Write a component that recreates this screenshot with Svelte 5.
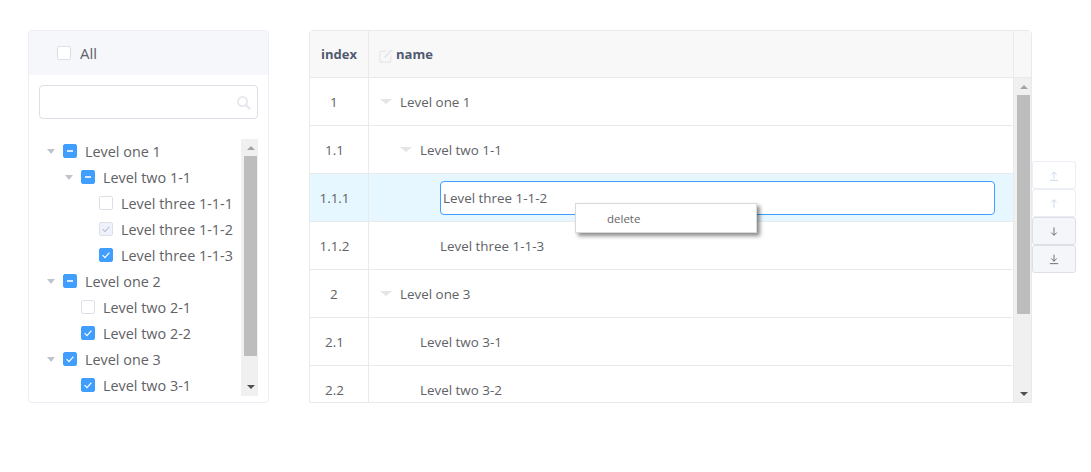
<script>
  const tree = [
    { label: 'Level one 1', level: 0, arrow: true, check: 'half' },
    { label: 'Level two 1-1', level: 1, arrow: true, check: 'half' },
    { label: 'Level three 1-1-1', level: 2, check: 'none' },
    { label: 'Level three 1-1-2', level: 2, check: 'disabled' },
    { label: 'Level three 1-1-3', level: 2, check: 'on' },
    { label: 'Level one 2', level: 0, arrow: true, check: 'half' },
    { label: 'Level two 2-1', level: 1, check: 'none' },
    { label: 'Level two 2-2', level: 1, check: 'on' },
    { label: 'Level one 3', level: 0, arrow: true, check: 'on' },
    { label: 'Level two 3-1', level: 1, check: 'on' }
  ];

  const rows = [
    { index: '1', name: 'Level one 1', level: 0, arrow: true },
    { index: '1.1', name: 'Level two 1-1', level: 1, arrow: true },
    { index: '1.1.1', name: 'Level three 1-1-2', level: 2, editing: true },
    { index: '1.1.2', name: 'Level three 1-1-3', level: 2 },
    { index: '2', name: 'Level one 3', level: 0, arrow: true },
    { index: '2.1', name: 'Level two 3-1', level: 1 },
    { index: '2.2', name: 'Level two 3-2', level: 1 }
  ];

  const moves = [
    { d: 'M7 13V3.5M3 7l4-4 4 4M1 15h12', off: true },
    { d: 'M7 14V2.5M3 6.5l4-4 4 4', off: true },
    { d: 'M7 2v11.5M3 9.5l4 4 4-4', off: false },
    { d: 'M7 1v9.5M3 6.5l4 4 4-4M1 14h12', off: false }
  ];
</script>

<div class="page">
  <section class="panel">
    <header class="panel-head">
      <span class="box"></span>
      <span class="all">All</span>
    </header>
    <div class="search">
      <svg class="search-icon" width="14" height="14" viewBox="0 0 14 14" fill="none" stroke="currentColor" stroke-width="1.8">
        <circle cx="5.6" cy="5.6" r="4.6" />
        <path d="M9 9l4.2 4.2" stroke-width="2.2" />
      </svg>
    </div>
    <div class="tree-wrap">
      <div class="tree">
        {#each tree as node}
          <div class="node" style:padding-left="{node.level * 18}px">
            <span class="caret" class:hidden={!node.arrow}></span>
            <span class="box {node.check}">
              {#if node.check === 'half'}
                <i class="dash"></i>
              {:else if node.check === 'on' || node.check === 'disabled'}
                <svg width="10" height="10" viewBox="0 0 10 10" fill="none" stroke="currentColor" stroke-width="1.2">
                  <path d="M1.6 5.2l2.4 2.4 4.4-5" />
                </svg>
              {/if}
            </span>
            <span class="node-label">{node.label}</span>
          </div>
        {/each}
      </div>
      <div class="scrollbar tree-bar">
        <span class="up"></span>
        <span class="thumb"></span>
        <span class="down"></span>
      </div>
    </div>
  </section>

  <section class="grid">
    <div class="grid-head">
      <div class="col-index head-cell">index</div>
      <div class="col-name head-cell">
        <svg class="edit" width="14" height="14" viewBox="0 0 14 14" fill="none" stroke="#e6e6e6" stroke-width="1.2">
          <path d="M7.5 2.2H2a1.2 1.2 0 0 0-1.2 1.2V12A1.2 1.2 0 0 0 2 13.2h8.6a1.2 1.2 0 0 0 1.2-1.2V6.5" />
          <path d="M5.6 8.4L12.8.8" stroke-width="1.8" />
        </svg>
        name
      </div>
      <div class="head-gutter"></div>
    </div>
    <div class="grid-body">
      <div class="rows">
        {#each rows as row}
          <div class="row" class:current={row.editing}>
            <div class="col-index cell-index">{row.index}</div>
            <div class="col-name cell-name" style:padding-left="{row.level * 20 + 11}px">
              <span class="tri" class:hidden={!row.arrow}></span>
              {#if row.editing}
                <input class="editor" value={row.name} />
              {:else}
                <span>{row.name}</span>
              {/if}
            </div>
          </div>
        {/each}
      </div>
      <div class="scrollbar grid-bar">
        <span class="up"></span>
        <span class="thumb"></span>
        <span class="down"></span>
      </div>
    </div>
    <div class="menu">delete</div>
  </section>

  <div class="toolbar">
    {#each moves as move}
      <button class="move" class:off={move.off}>
        <svg width="10" height="11" viewBox="0 0 14 16" fill="none" stroke="currentColor" stroke-width="1.3">
          <path d={move.d} />
        </svg>
      </button>
    {/each}
  </div>
</div>

<style>
  :global(body) {
    margin: 0;
    background: #fff;
  }

  .page {
    display: flex;
    align-items: flex-start;
    width: 1091px;
    height: 472px;
    box-sizing: border-box;
    padding: 30px 0 0 28px;
    font-family: "Open Sans", "Noto Sans", sans-serif;
    font-size: 14.4px;
    color: #606266;
    overflow: hidden;
  }

  /* left panel */
  .panel {
    width: 241px;
    height: 373px;
    box-sizing: border-box;
    border: 1px solid #ebeef5;
    border-radius: 4px;
    overflow: hidden;
    flex: none;
  }

  .panel-head {
    display: flex;
    align-items: center;
    height: 44px;
    padding-left: 28px;
    background: #f5f7fa;
  }

  .all {
    margin-left: 9px;
    font-size: 15px;
  }

  .box {
    display: inline-flex;
    align-items: center;
    justify-content: center;
    width: 14px;
    height: 14px;
    box-sizing: border-box;
    border: 1px solid #dcdfe6;
    border-radius: 2px;
    background: #fff;
    flex: none;
  }

  .box.half,
  .box.on {
    background: #409eff;
    border-color: #409eff;
    color: #fff;
  }

  .box.disabled {
    background: #edf2fc;
    color: #c0c4cc;
  }

  .dash {
    width: 6px;
    height: 2px;
    background: rgba(255, 255, 255, 0.8);
  }

  .search {
    position: relative;
    height: 34px;
    box-sizing: border-box;
    margin: 10px 10px 0;
    border: 1px solid #dcdfe6;
    border-radius: 4px;
  }

  .search-icon {
    position: absolute;
    right: 6px;
    top: 10px;
    color: #e4e7ed;
  }

  .tree-wrap {
    display: flex;
    height: 257px;
    margin: 20px 10px 0;
  }

  .tree {
    flex: 1;
    margin-top: -1px;
    overflow: hidden;
  }

  .node {
    display: flex;
    align-items: center;
    height: 26px;
    white-space: nowrap;
  }

  .caret {
    width: 0;
    height: 0;
    margin: 0 8px;
    border-style: solid;
    border-width: 5px 4px 0;
    border-color: #c0c4cc transparent transparent;
    flex: none;
  }

  .hidden {
    visibility: hidden;
  }

  .node-label {
    margin-left: 8px;
  }

  /* classic scrollbar */
  .scrollbar {
    display: flex;
    flex-direction: column;
    align-items: center;
    box-sizing: border-box;
    width: 17px;
    padding-left: 2px;
    background: #f0f0f0;
    flex: none;
  }

  .up,
  .down {
    width: 0;
    height: 0;
    flex: none;
    border-style: solid;
    border-color: transparent;
  }

  .up {
    margin: 7px 0 6px;
    border-width: 0 4px 4px;
    border-bottom-color: #a3a3a3;
  }

  .down {
    margin-top: auto;
    margin-bottom: 7px;
    border-width: 4px 4px 0;
    border-top-color: #505050;
  }

  .thumb {
    width: 13px;
    background: #bdbdbd;
    flex: none;
  }

  .tree-bar .thumb {
    height: 200px;
  }

  /* right table */
  .grid {
    position: relative;
    width: 723px;
    height: 373px;
    box-sizing: border-box;
    margin-left: 40px;
    border: 1px solid #e8eaec;
    border-radius: 4px 4px 0 0;
    flex: none;
  }

  .grid-head {
    display: flex;
    height: 47px;
    box-sizing: border-box;
    border-bottom: 1px solid #e8eaec;
    background: #f8f8f9;
  }

  .head-cell {
    display: flex;
    align-items: center;
    font-weight: 700;
    font-size: 13px;
    color: #515a6e;
  }

  .col-index {
    width: 58px;
    border-right: 1px solid #e8eaec;
    flex: none;
  }

  .head-cell.col-index {
    justify-content: center;
  }

  .col-name {
    flex: 1;
    min-width: 0;
  }

  .head-cell.col-name {
    padding-left: 10px;
  }

  .edit {
    margin: 3px 3px 0 0;
  }

  .head-gutter {
    width: 17px;
    border-left: 1px solid #e8eaec;
  }

  .grid-body {
    display: flex;
    height: 324px;
  }

  .rows {
    flex: 1;
    min-width: 0;
    overflow: hidden;
    border-right: 1px solid #e8eaec;
  }

  .row {
    display: flex;
    height: 48px;
    box-sizing: border-box;
    border-bottom: 1px solid #e8eaec;
    font-size: 13.4px;
  }

  .row.current {
    background: #e6f7ff;
  }

  .cell-index {
    display: flex;
    align-items: center;
    justify-content: center;
    text-indent: -9px;
  }

  .cell-name {
    display: flex;
    align-items: center;
  }

  .tri {
    width: 0;
    height: 0;
    margin-right: 8px;
    border-style: solid;
    border-width: 5px 6px 0;
    border-color: #e4e5e7 transparent transparent;
    flex: none;
  }

  .editor {
    width: 555px;
    height: 34px;
    box-sizing: border-box;
    padding: 0 2px;
    border: 1px solid #409eff;
    border-radius: 4px;
    outline: none;
    background: #fff;
    font: inherit;
    color: #606266;
  }

  .grid-bar .thumb {
    height: 219px;
  }

  .grid-bar .down {
    margin-bottom: 6px;
  }

  .menu {
    position: absolute;
    left: 265px;
    top: 172px;
    width: 182px;
    height: 30px;
    box-sizing: border-box;
    padding-left: 31px;
    border: 1px solid #d9d9d9;
    background: #fff;
    box-shadow: 3px 3px 4px rgba(0, 0, 0, 0.45);
    font-size: 11.5px;
    line-height: 29px;
    color: #666;
  }

  /* move buttons */
  .toolbar {
    display: flex;
    flex-direction: column;
    margin-top: 131px;
    flex: none;
  }

  .move {
    display: flex;
    align-items: center;
    justify-content: center;
    width: 44px;
    height: 28px;
    padding: 0;
    border: 1px solid #dcdfe6;
    border-radius: 3px;
    background: #f4f6f9;
    color: #606266;
  }

  .move.off {
    border-color: #ebeef5;
    background: #fff;
    color: #c5d5e6;
  }
</style>
